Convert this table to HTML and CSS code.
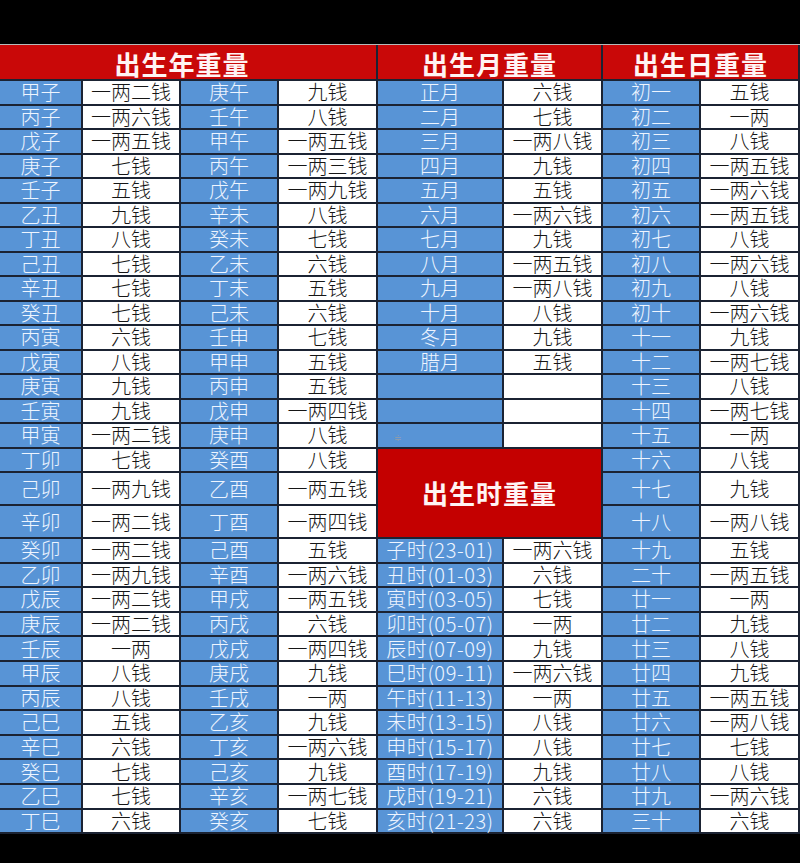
FILE: index.html
```html
<!DOCTYPE html>
<html lang="zh-CN">
<head>
<meta charset="utf-8">
<title>称骨重量表</title>
<link rel="stylesheet" href="styles.css">
</head>
<body>
<div class="page">
<div class="table">
<div class="h span4">出生年重量</div><div class="h span2">出生月重量</div><div class="h span2">出生日重量</div>

<div class="b">甲子</div><div class="w">一两二钱</div><div class="b">庚午</div><div class="w">九钱</div><div class="b">正月</div><div class="w">六钱</div><div class="b">初一</div><div class="w">五钱</div>
<div class="b">丙子</div><div class="w">一两六钱</div><div class="b">壬午</div><div class="w">八钱</div><div class="b">二月</div><div class="w">七钱</div><div class="b">初二</div><div class="w">一两</div>
<div class="b">戊子</div><div class="w">一两五钱</div><div class="b">甲午</div><div class="w">一两五钱</div><div class="b">三月</div><div class="w">一两八钱</div><div class="b">初三</div><div class="w">八钱</div>
<div class="b">庚子</div><div class="w">七钱</div><div class="b">丙午</div><div class="w">一两三钱</div><div class="b">四月</div><div class="w">九钱</div><div class="b">初四</div><div class="w">一两五钱</div>
<div class="b">壬子</div><div class="w">五钱</div><div class="b">戊午</div><div class="w">一两九钱</div><div class="b">五月</div><div class="w">五钱</div><div class="b">初五</div><div class="w">一两六钱</div>
<div class="b">乙丑</div><div class="w">九钱</div><div class="b">辛未</div><div class="w">八钱</div><div class="b">六月</div><div class="w">一两六钱</div><div class="b">初六</div><div class="w">一两五钱</div>
<div class="b">丁丑</div><div class="w">八钱</div><div class="b">癸未</div><div class="w">七钱</div><div class="b">七月</div><div class="w">九钱</div><div class="b">初七</div><div class="w">八钱</div>
<div class="b">己丑</div><div class="w">七钱</div><div class="b">乙未</div><div class="w">六钱</div><div class="b">八月</div><div class="w">一两五钱</div><div class="b">初八</div><div class="w">一两六钱</div>
<div class="b">辛丑</div><div class="w">七钱</div><div class="b">丁未</div><div class="w">五钱</div><div class="b">九月</div><div class="w">一两八钱</div><div class="b">初九</div><div class="w">八钱</div>
<div class="b">癸丑</div><div class="w">七钱</div><div class="b">己未</div><div class="w">六钱</div><div class="b">十月</div><div class="w">八钱</div><div class="b">初十</div><div class="w">一两六钱</div>
<div class="b">丙寅</div><div class="w">六钱</div><div class="b">壬申</div><div class="w">七钱</div><div class="b">冬月</div><div class="w">九钱</div><div class="b">十一</div><div class="w">九钱</div>
<div class="b">戊寅</div><div class="w">八钱</div><div class="b">甲申</div><div class="w">五钱</div><div class="b">腊月</div><div class="w">五钱</div><div class="b">十二</div><div class="w">一两七钱</div>
<div class="b">庚寅</div><div class="w">九钱</div><div class="b">丙申</div><div class="w">五钱</div><div class="b"></div><div class="w"></div><div class="b">十三</div><div class="w">八钱</div>
<div class="b">壬寅</div><div class="w">九钱</div><div class="b">戊申</div><div class="w">一两四钱</div><div class="b"></div><div class="w"></div><div class="b">十四</div><div class="w">一两七钱</div>
<div class="b">甲寅</div><div class="w">一两二钱</div><div class="b">庚申</div><div class="w">八钱</div><div class="b left"><span class="mark">≑</span></div><div class="w"></div><div class="b">十五</div><div class="w">一两</div>
<div class="b">丁卯</div><div class="w">七钱</div><div class="b">癸酉</div><div class="w">八钱</div><div class="h hour">出生时重量</div><div class="b">十六</div><div class="w">八钱</div>
<div class="b">己卯</div><div class="w">一两九钱</div><div class="b">乙酉</div><div class="w">一两五钱</div><div class="b">十七</div><div class="w">九钱</div>
<div class="b">辛卯</div><div class="w">一两二钱</div><div class="b">丁酉</div><div class="w">一两四钱</div><div class="b">十八</div><div class="w">一两八钱</div>
<div class="b">癸卯</div><div class="w">一两二钱</div><div class="b">己酉</div><div class="w">五钱</div><div class="b t">子时(23-01)</div><div class="w">一两六钱</div><div class="b">十九</div><div class="w">五钱</div>
<div class="b">乙卯</div><div class="w">一两九钱</div><div class="b">辛酉</div><div class="w">一两六钱</div><div class="b t">丑时(01-03)</div><div class="w">六钱</div><div class="b">二十</div><div class="w">一两五钱</div>
<div class="b">戊辰</div><div class="w">一两二钱</div><div class="b">甲戌</div><div class="w">一两五钱</div><div class="b t">寅时(03-05)</div><div class="w">七钱</div><div class="b">廿一</div><div class="w">一两</div>
<div class="b">庚辰</div><div class="w">一两二钱</div><div class="b">丙戌</div><div class="w">六钱</div><div class="b t">卯时(05-07)</div><div class="w">一两</div><div class="b">廿二</div><div class="w">九钱</div>
<div class="b">壬辰</div><div class="w">一两</div><div class="b">戊戌</div><div class="w">一两四钱</div><div class="b t">辰时(07-09)</div><div class="w">九钱</div><div class="b">廿三</div><div class="w">八钱</div>
<div class="b">甲辰</div><div class="w">八钱</div><div class="b">庚戌</div><div class="w">九钱</div><div class="b t">巳时(09-11)</div><div class="w">一两六钱</div><div class="b">廿四</div><div class="w">九钱</div>
<div class="b">丙辰</div><div class="w">八钱</div><div class="b">壬戌</div><div class="w">一两</div><div class="b t">午时(11-13)</div><div class="w">一两</div><div class="b">廿五</div><div class="w">一两五钱</div>
<div class="b">己巳</div><div class="w">五钱</div><div class="b">乙亥</div><div class="w">九钱</div><div class="b t">未时(13-15)</div><div class="w">八钱</div><div class="b">廿六</div><div class="w">一两八钱</div>
<div class="b">辛巳</div><div class="w">六钱</div><div class="b">丁亥</div><div class="w">一两六钱</div><div class="b t">申时(15-17)</div><div class="w">八钱</div><div class="b">廿七</div><div class="w">七钱</div>
<div class="b">癸巳</div><div class="w">七钱</div><div class="b">己亥</div><div class="w">九钱</div><div class="b t">酉时(17-19)</div><div class="w">九钱</div><div class="b">廿八</div><div class="w">八钱</div>
<div class="b">乙巳</div><div class="w">七钱</div><div class="b">辛亥</div><div class="w">一两七钱</div><div class="b t">戌时(19-21)</div><div class="w">六钱</div><div class="b">廿九</div><div class="w">一两六钱</div>
<div class="b">丁巳</div><div class="w">六钱</div><div class="b">癸亥</div><div class="w">七钱</div><div class="b t">亥时(21-23)</div><div class="w">六钱</div><div class="b">三十</div><div class="w">六钱</div>
</div>
</div>
</body>
</html>
```

FILE: styles.css
```css
html, body {
  margin: 0;
  padding: 0;
  background: #000;
}
.page {
  width: 800px;
  height: 863px;
  padding-top: 44px;
  box-sizing: border-box;
  background: #000;
}
.table {
  display: grid;
  grid-template-columns: 81px 96px 96px 97px 124px 97px 96px 97px;
  grid-template-rows: 34px repeat(16, 22.5px) repeat(2, 31px) repeat(12, 22.6px);
  column-gap: 2px;
  row-gap: 2px;
  padding: 0 2px 2px 0;
  width: 800px;
  box-sizing: border-box;
  background: #1b2333;
  border-top: 1px solid #b9b9b9;
  font-family: "Noto Sans CJK SC", "Noto Sans", sans-serif;
  font-size: 20px;
  font-weight: 300;
}
.table > div {
  display: flex;
  align-items: center;
  justify-content: center;
  white-space: nowrap;
  line-height: 1;
}
.h {
  background: #c90808;
  color: #fff4f4;
  font-weight: bold;
  font-size: 26px;
  letter-spacing: 1px;
  padding-top: 3px;
  box-sizing: border-box;
}
.span4 {
  grid-column: span 4;
  padding-right: 12px;
}
.span2 {
  grid-column: span 2;
}
.table > .hour {
  grid-column: span 2;
  grid-row: span 3;
  background: #c40000;
  padding-top: 0;
}
.b {
  background: #5894d6;
  color: #eef5ff;
}
.w {
  background: #ffffff;
  color: #161616;
}
.t {
  letter-spacing: 0.6px;
}
.table > .left {
  justify-content: flex-start;
  padding-left: 16px;
}
.mark {
  font-size: 9px;
  color: #8a9bb0;
  padding-top: 4px;
}
```
